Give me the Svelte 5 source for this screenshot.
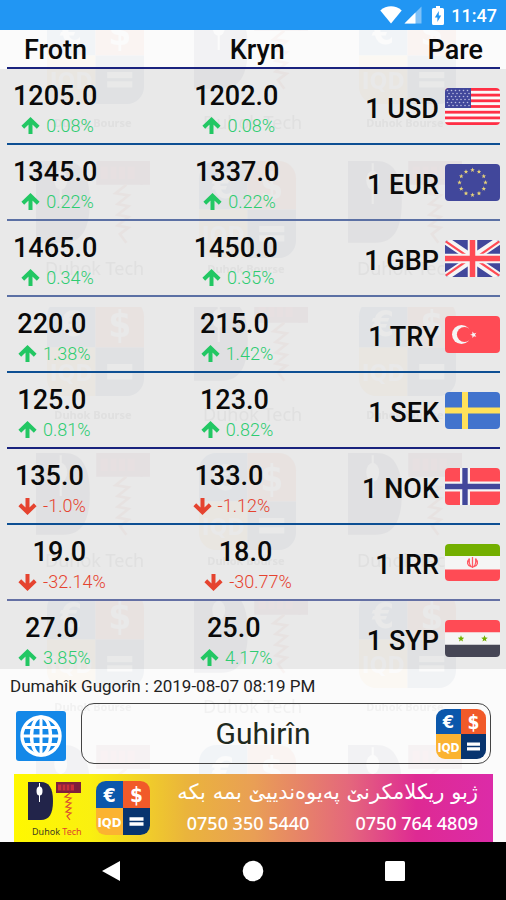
<script>
  const rates = [
    { code: 'USD', sell: '1205.0', sellChange: '0.08%', buy: '1202.0', buyChange: '0.08%', line: '#0d4f93' },
    { code: 'EUR', sell: '1345.0', sellChange: '0.22%', buy: '1337.0', buyChange: '0.22%', line: '#5b70a4' },
    { code: 'GBP', sell: '1465.0', sellChange: '0.34%', buy: '1450.0', buyChange: '0.35%', line: '#5b70a4' },
    { code: 'TRY', sell: '220.0', sellChange: '1.38%', buy: '215.0', buyChange: '1.42%', line: '#0d4f93' },
    { code: 'SEK', sell: '125.0', sellChange: '0.81%', buy: '123.0', buyChange: '0.82%', line: '#1a237e' },
    { code: 'NOK', sell: '135.0', sellChange: '-1.0%', buy: '133.0', buyChange: '-1.12%', line: '#0d4f93' },
    { code: 'IRR', sell: '19.0', sellChange: '-32.14%', buy: '18.0', buyChange: '-30.77%', line: '#6470a4' },
    { code: 'SYP', sell: '27.0', sellChange: '3.85%', buy: '25.0', buyChange: '4.17%', line: 'transparent' }
  ];

  const star = 'M0 -3.4 L0.9 -1.1 L3.3 -1 L1.4 0.5 L2 2.8 L0 1.5 L-2 2.8 L-1.4 0.5 L-3.3 -1 L-0.9 -1.1 Z';
  const ring = Array.from({ length: 12 }, (_, i) => ({
    x: 27.5 + 13 * Math.sin((i * Math.PI) / 6),
    y: 18.5 - 12.5 * Math.cos((i * Math.PI) / 6)
  }));
</script>

{#snippet bourseMark()}
  <path d="M0 25V9a9 9 0 0 1 9-9H25V25Z" fill="#0b57ab" />
  <path d="M25 0H41a9 9 0 0 1 9 9V25H25Z" fill="#f15a29" />
  <path d="M0 25H25V50H9a9 9 0 0 1-9-9Z" fill="#fbb331" />
  <path d="M25 25H50V41a9 9 0 0 1-9 9H25Z" fill="#07346f" />
  <text x="12.5" y="19" class="glyph" font-size="18">€</text>
  <text x="37.5" y="19.5" class="glyph" font-size="19">$</text>
  <text x="12.5" y="42.5" class="glyph" font-size="12">IQD</text>
  <path d="M31 33.5H44V36.7H31ZM31 38.3H44V41.5H31Z" fill="#fff" />
{/snippet}

{#snippet techMark()}
  <path d="M0 0H13C21 0 25 6 25 19S21 38 13 38H0Z" fill="#22244a" />
  <ellipse cx="11.5" cy="9" rx="3" ry="4.5" fill="#fff" />
  <path d="M11.5 1V20" stroke="#fff" stroke-width="1" />
  <path d="M28 0H53V11H28Z" fill="#7e1f3c" />
  <path d="M30 2.5H46V8.5H30Z" fill="#c92d3b" />
  <path d="M34 2.5V8.5M38 2.5V8.5M42 2.5V8.5M49 0V11" stroke="#7e1f3c" stroke-width="1.2" />
  <path d="M42 11L37 15L43 16L38 20L43 21L38 25L43 26L38 30L43 31L39 34L42 38" fill="none" stroke="#d9502f" stroke-width="1.2" />
{/snippet}

{#snippet flag(code)}
  <svg class="flag" viewBox="0 0 55 37" aria-hidden="true">
    {#if code === 'USD'}
      <path d="M0 0H55V37H0Z" fill="#fafafa" />
      {#each [0, 1, 2, 3, 4, 5, 6] as i}
        <rect x="0" y={i * 5.7} width="55" height="2.8" fill="#ff2f45" />
      {/each}
      <path d="M0 0H26V20H0Z" fill="#41479b" />
      {#each [0, 1, 2, 3, 4, 5] as r}
        {#each [0, 1, 2, 3, 4, 5] as c}
          <circle cx={2.5 + c * 4 + (r % 2) * 1.5} cy={2.5 + r * 3} r="0.8" fill="#b9bce0" />
        {/each}
      {/each}
    {:else if code === 'EUR'}
      <path d="M0 0H55V37H0Z" fill="#41479b" />
      {#each ring as p}
        <path d={star} transform="translate({p.x} {p.y}) scale(0.7)" fill="#e6d27a" />
      {/each}
    {:else if code === 'GBP'}
      <path d="M0 0H55V37H0Z" fill="#41479b" />
      <path d="M0 0L55 37M55 0L0 37" stroke="#f5f5f5" stroke-width="8" />
      <path d="M0 1L25 18M55 36L30 19M55 1L32 17M0 36L23 20" stroke="#ff4b55" stroke-width="2.2" />
      <path d="M27.5 0V37M0 18.5H55" stroke="#f5f5f5" stroke-width="9.5" />
      <path d="M27.5 0V37M0 18.5H55" stroke="#ff4b55" stroke-width="5.5" />
    {:else if code === 'TRY'}
      <path d="M0 0H55V37H0Z" fill="#ff4b55" />
      <circle cx="16.5" cy="18.5" r="9.5" fill="#f5f5f5" />
      <circle cx="19.5" cy="18.5" r="7.6" fill="#ff4b55" />
      <path d={star} transform="translate(28.5 18.7) rotate(-18)" fill="#f5f5f5" />
    {:else if code === 'SEK'}
      <path d="M0 0H55V37H0Z" fill="#4173cd" />
      <path d="M20 0V37M0 18.5H55" stroke="#ffe15a" stroke-width="6" />
    {:else if code === 'NOK'}
      <path d="M0 0H55V37H0Z" fill="#ff4b55" />
      <path d="M20 0V37M0 18.5H55" stroke="#f5f5f5" stroke-width="10" />
      <path d="M20 0V37M0 18.5H55" stroke="#41479b" stroke-width="5.4" />
    {:else if code === 'IRR'}
      <path d="M0 0H55V37H0Z" fill="#f5f5f5" />
      <path d="M0 0H55V12H0Z" fill="#73af00" />
      <path d="M0 25.5H55V37H0Z" fill="#ff4b55" />
      <path d="M27.5 13V24M24.5 14.5C21 18 22.5 22 26 22.5C24 20 24 17 24.5 14.5M30.5 14.5C34 18 32.5 22 29 22.5C31 20 31 17 30.5 14.5" fill="none" stroke="#ff5c66" stroke-width="1.3" />
    {:else}
      <path d="M0 0H55V37H0Z" fill="#f5f5f5" />
      <path d="M0 0H55V12.3H0Z" fill="#ff4b55" />
      <path d="M0 24.7H55V37H0Z" fill="#464655" />
      <path d={star} transform="translate(16 18.7)" fill="#73af00" />
      <path d={star} transform="translate(39.5 18.7)" fill="#73af00" />
    {/if}
  </svg>
{/snippet}

{#snippet quote(price, change)}
  {@const down = change.startsWith('-')}
  <div class="quote">
    <span class="price">{price}</span>
    <span class="change" class:down>
      <svg width="19" height="18" viewBox="0 0 19 18" aria-hidden="true">
        <path
          d={down
            ? 'M9.5 1V15M1.8 7.8L9.5 15.2L17.2 7.8'
            : 'M9.5 17V3M1.8 10.2L9.5 2.8L17.2 10.2'}
          fill="none" stroke="currentColor" stroke-width="4"
        />
      </svg>
      {change}
    </span>
  </div>
{/snippet}

<div class="app">
  <svg class="wallpaper" aria-hidden="true">
    <defs>
      <pattern id="marks" x="0" y="15" width="312" height="292" patternUnits="userSpaceOnUse">
        <g transform="translate(47 -8) scale(1.94)">{@render bourseMark()}</g>
        <text x="93" y="112" class="small-label">Duhok Bourse</text>
        <g transform="translate(194 -8) scale(2.15)">{@render techMark()}</g>
        <text x="203" y="114" class="big-label">Duhok Tech</text>
        <g transform="translate(36 146) scale(2.15)">{@render techMark()}</g>
        <text x="45" y="260" class="big-label">Duhok Tech</text>
        <g transform="translate(199 146) scale(1.94)">{@render bourseMark()}</g>
        <text x="246" y="258" class="small-label">Duhok Bourse</text>
      </pattern>
    </defs>
    <rect width="100%" height="100%" fill="url(#marks)" />
  </svg>

  <header class="status">
    <svg width="22" height="18" viewBox="0 0 22 18" aria-hidden="true">
      <path d="M11 17.5L0.3 4.4C6.5 -1.2 15.5 -1.2 21.7 4.4Z" fill="#fff" />
    </svg>
    <svg width="18" height="18" viewBox="0 0 18 18" aria-hidden="true">
      <path d="M17.5 0.5V17.5H0.5Z" fill="#7fc1f8" />
      <path d="M11.5 6.5V17.5H0.5Z" fill="#fff" />
    </svg>
    <svg class="battery" width="12" height="19" viewBox="0 0 12 19" aria-hidden="true">
      <path d="M4 0H8V2H10.5Q12 2 12 3.5V17.5Q12 19 10.5 19H1.5Q0 19 0 17.5V3.5Q0 2 1.5 2H4Z" fill="#fff" />
      <path d="M6.8 5L2.8 11.5H5.4V16L9.2 9.6H6.8Z" fill="#2196f3" />
    </svg>
    <span>11:47</span>
  </header>

  <main>
    <table>
      <thead>
        <tr>
          <th scope="col">Frotn</th>
          <th scope="col">Kryn</th>
          <th scope="col">Pare</th>
        </tr>
      </thead>
      <tbody>
        {#each rates as rate}
          <tr style="border-color: {rate.line}">
            <td>{@render quote(rate.sell, rate.sellChange)}</td>
            <td class="buy">{@render quote(rate.buy, rate.buyChange)}</td>
            <td class="currency">
              <span>1 {rate.code}</span>
              {@render flag(rate.code)}
            </td>
          </tr>
        {/each}
      </tbody>
    </table>

    <p class="updated">Dumahîk Gugorîn : 2019-08-07 08:19 PM</p>

    <div class="actions">
      <button class="globe" aria-label="Ziman">
        <svg width="50" height="50" viewBox="0 0 50 50" aria-hidden="true">
          <g fill="none" stroke="#fff" stroke-width="3.4">
            <circle cx="25" cy="25" r="19" />
            <ellipse cx="25" cy="25" rx="9.5" ry="19" />
            <path d="M25 6V44M6 25H44M9 16.5H41M9 33.5H41" stroke-width="3" />
          </g>
        </svg>
      </button>
      <button class="convert">
        <span>Guhirîn</span>
        <svg width="50" height="50" viewBox="0 0 50 50" aria-hidden="true">{@render bourseMark()}</svg>
      </button>
    </div>

    <a class="banner" href="#contact">
      <svg class="logo" width="56" height="60" viewBox="0 0 56 60" aria-hidden="true">
        {@render techMark()}
        <text x="4" y="53" class="logo-label">Duhok <tspan fill="#e0452c">Tech</tspan></text>
      </svg>
      <svg width="54" height="54" viewBox="0 0 50 50" aria-hidden="true">{@render bourseMark()}</svg>
      <div class="contact">
        <span class="ad" dir="rtl" lang="ku">ژبو ریکلامکرنێ پەیوەندییێ بمە بکە</span>
        <span class="phones"><span>0750 350 5440</span><span>0750 764 4809</span></span>
      </div>
    </a>
  </main>

  <nav>
    <button aria-label="Back">
      <svg width="20" height="22" viewBox="0 0 20 22"><path d="M19 1V21L1 11Z" fill="#fff" /></svg>
    </button>
    <button aria-label="Home">
      <svg width="22" height="22" viewBox="0 0 22 22"><circle cx="11" cy="11" r="10.3" fill="#fff" /></svg>
    </button>
    <button aria-label="Recent apps">
      <svg width="20" height="20" viewBox="0 0 20 20"><rect width="20" height="20" rx="1.5" fill="#fff" /></svg>
    </button>
  </nav>
</div>

<style>
  .app {
    position: relative;
    isolation: isolate;
    display: flex;
    flex-direction: column;
    min-height: 100vh;
    background: #fbfbfb;
    color: #0a0a0a;
    font-family: Roboto, 'Liberation Sans', sans-serif;
  }

  svg {
    display: block;
    flex: none;
  }

  button {
    margin: 0;
    padding: 0;
    border: 0;
    background: none;
    font: inherit;
    color: inherit;
    cursor: pointer;
  }

  .wallpaper {
    position: absolute;
    inset: 0;
    z-index: -1;
    width: 100%;
    height: 100%;
    opacity: 0.035;
  }

  .glyph {
    fill: #fff;
    font-family: 'DejaVu Sans Condensed', 'DejaVu Sans', sans-serif;
    font-weight: 700;
    text-anchor: middle;
  }

  .small-label {
    font: 700 11px 'Noto Sans', sans-serif;
    text-anchor: middle;
  }

  .big-label {
    font: 400 18px 'Noto Sans', sans-serif;
  }

  .status {
    display: flex;
    align-items: center;
    justify-content: flex-end;
    gap: 2px;
    height: 30px;
    padding-right: 9px;
    background: #2196f3;
    color: #fff;
    font-size: 18px;
    font-weight: 500;
  }

  .battery {
    margin: 0 5px 0 8px;
  }

  table,
  thead,
  tbody {
    display: block;
  }

  tr {
    display: flex;
    align-items: flex-start;
    justify-content: space-between;
    margin: 0 6px 0 7px;
    border-bottom: 2px solid #1a237e;
  }

  th,
  td {
    display: block;
    padding: 0;
  }

  thead tr {
    height: 37px;
    padding: 0 17px;
  }

  th {
    font-size: 27px;
    font-weight: 500;
    line-height: 40px;
  }

  tbody {
    background: rgba(0, 0, 0, 0.07);
  }

  tbody tr {
    height: 74px;
    padding-left: 6px;
  }

  tbody tr:last-child {
    height: 68px;
    border-bottom: 0;
  }

  .buy {
    margin-left: 10px;
  }

  .quote {
    display: flex;
    flex-direction: column;
    align-items: center;
    padding-top: 11px;
  }

  .price {
    font-size: 27px;
    font-weight: 500;
    line-height: 32px;
  }

  .change {
    display: flex;
    align-items: center;
    gap: 6px;
    padding: 3px 0 0 5px;
    color: #2ecc71;
    font-size: 18px;
    font-weight: 300;
    line-height: 22px;
  }

  .change svg {
    color: #22c763;
  }

  .change.down,
  .change.down svg {
    color: #e5432f;
  }

  .currency {
    display: flex;
    align-items: center;
    gap: 6px;
    padding-top: 19px;
    font-size: 27px;
    font-weight: 500;
    line-height: 32px;
  }

  .currency span {
    padding-top: 4px;
  }

  .flag {
    width: 55px;
    height: 37px;
    border-radius: 4px;
  }

  .updated {
    margin: 0;
    padding: 5px 10px;
    color: #222;
    font-size: 17px;
    line-height: 24px;
  }

  .actions {
    display: flex;
    align-items: center;
    gap: 15px;
    padding: 0 15px 10px 16px;
  }

  .globe {
    margin-top: 4px;
    border-radius: 3px;
    background: #1488e8;
  }

  .convert {
    display: flex;
    flex: 1;
    align-items: center;
    height: 61px;
    padding: 0 4px 0 8px;
    border: 1px solid #444;
    border-radius: 13px;
    color: #1f2a20;
    font-size: 30px;
  }

  .convert span {
    flex: 1;
  }

  .banner {
    display: flex;
    align-items: center;
    gap: 12px;
    height: 68px;
    margin: 0 13px 0 14px;
    padding: 0 15px 0 14px;
    background: linear-gradient(90deg, #fff800 0%, #faf010 16%, #eab43c 36%, #e99f55 50%, #e4677c 70%, #de2a93 84%, #dc2ba8 100%);
    color: #fff;
    text-decoration: none;
  }

  .logo {
    margin-top: 8px;
  }

  .logo-label {
    fill: #3c3c20;
    font: 400 9px 'Noto Sans', sans-serif;
  }

  .contact {
    display: flex;
    flex: 1;
    flex-direction: column;
    align-items: flex-end;
    min-width: 0;
  }

  .ad {
    font: 400 21px/30px 'DejaVu Sans', sans-serif;
    white-space: nowrap;
  }

  .phones {
    display: flex;
    gap: 46px;
    font: 500 18px/32px 'Noto Sans', sans-serif;
    white-space: nowrap;
  }

  nav {
    display: flex;
    flex: 1;
    align-items: center;
    justify-content: space-between;
    min-height: 58px;
    padding: 0 89px;
    background: #000;
  }

  nav button {
    display: grid;
    place-items: center;
    width: 44px;
    height: 44px;
  }
</style>
